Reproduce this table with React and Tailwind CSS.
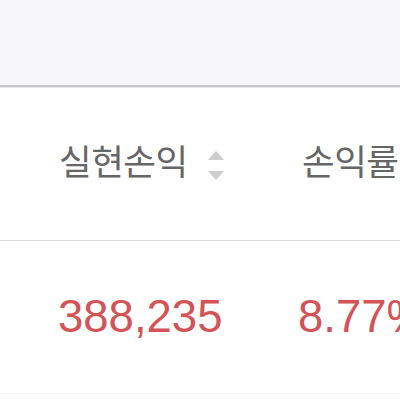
export default function App() {
  return (
    <div className="w-[400px] h-[400px] overflow-hidden bg-white" style={{ fontFamily: '"Liberation Sans", "Noto Sans CJK KR", sans-serif' }}>
      <div className="h-[85px] bg-[#f7f7f9]" />
      <div className="h-[2px] bg-[#c8c8c8]" />
      <div className="h-px bg-[#e6e6e6]" />

      {/* header */}
      <div className="h-[153px] flex items-center pl-[59px] border-b border-[#dcdcdc] whitespace-nowrap">
        <div className="w-[243px] shrink-0 flex items-center gap-[20px]">
          <span className="text-[35.5px] text-[#666666] tracking-[-0.5px]">실현손익</span>
          <span className="flex flex-col gap-[11px] pt-[2px]">
            <span className="w-0 h-0 border-l-[8.5px] border-r-[8.5px] border-b-[9px] border-l-transparent border-r-transparent border-b-[#cdcdcd]" />
            <span className="w-0 h-0 border-l-[8.5px] border-r-[8.5px] border-t-[9px] border-l-transparent border-r-transparent border-t-[#cdcdcd]" />
          </span>
        </div>
        <span className="text-[35.5px] text-[#666666] tracking-[-0.5px]">손익률</span>
      </div>

      {/* row */}
      <div className="h-[153px] flex items-center pl-[58px] border-b border-[#f6f6f6] whitespace-nowrap">
        <span className="w-[240px] shrink-0 text-[45.5px] text-[#d25457]">388,235</span>
        <span className="text-[45.5px] text-[#d25457]">8.77%</span>
      </div>
    </div>
  );
}
